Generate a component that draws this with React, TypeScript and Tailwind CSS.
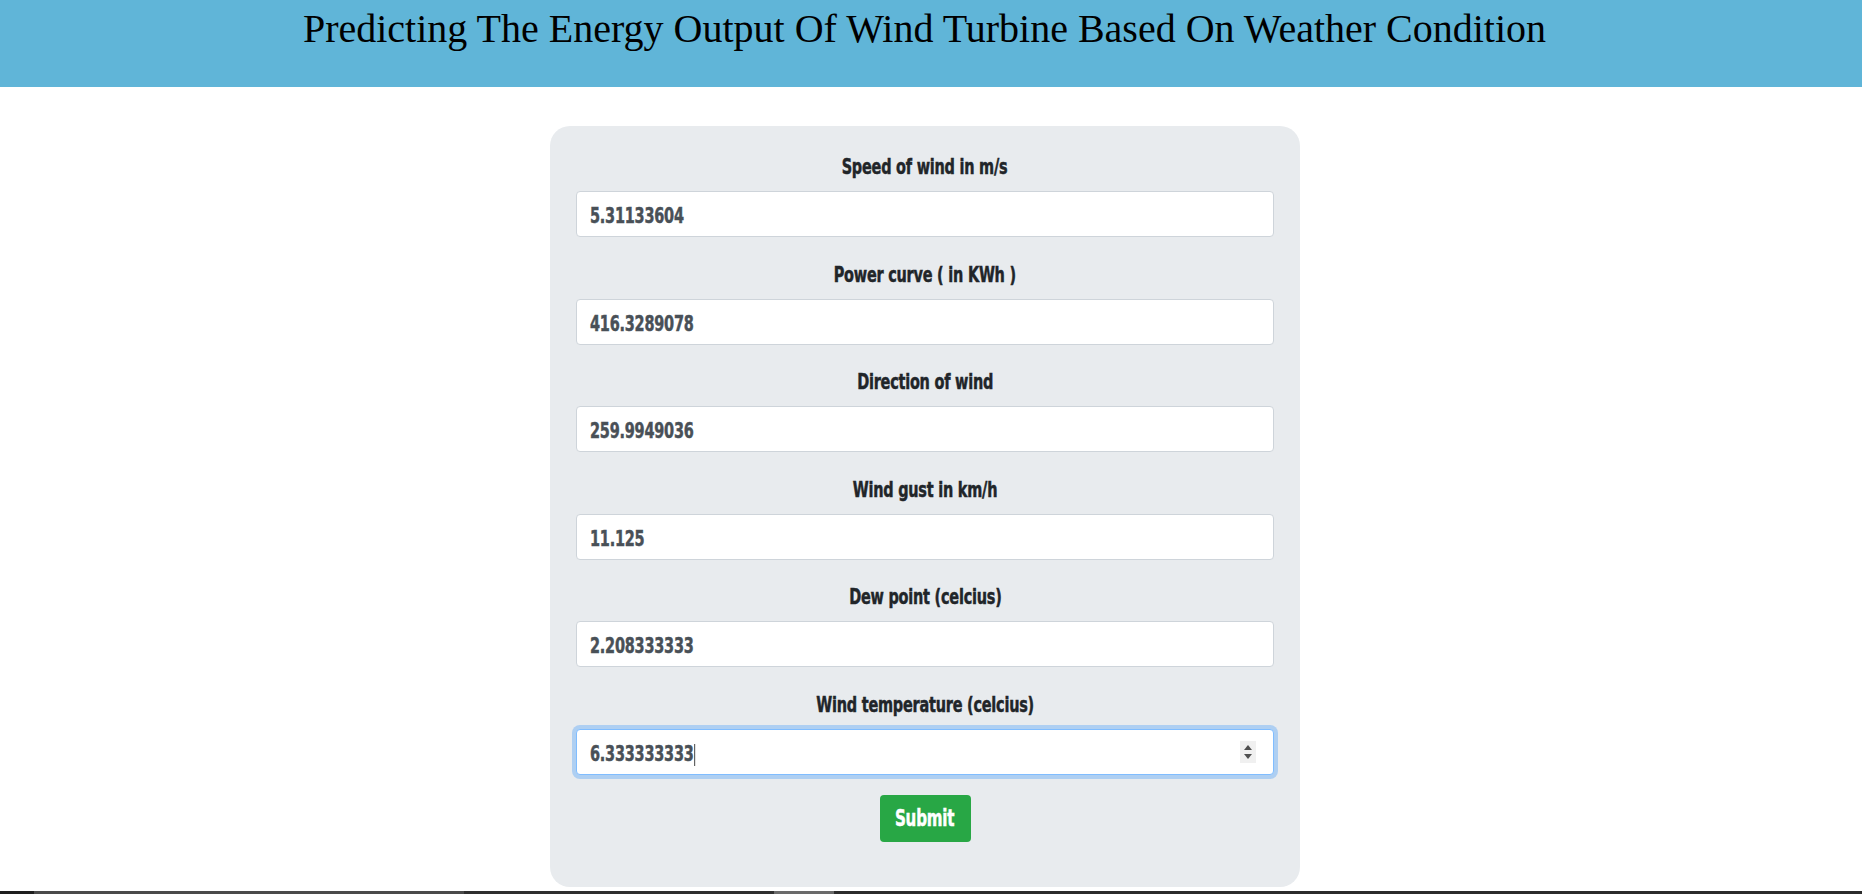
import React from "react";

const fields = [
  { label: "Speed of wind in m/s", value: "5.31133604" },
  { label: "Power curve ( in KWh )", value: "416.3289078" },
  { label: "Direction of wind", value: "259.9949036" },
  { label: "Wind gust in km/h", value: "11.125" },
  { label: "Dew point (celcius)", value: "2.208333333" },
];

const impact = { fontFamily: '"DejaVu Sans Condensed", "DejaVu Sans", "Liberation Sans", sans-serif' };

function Label({ text }: { text: string }) {
  return (
    <div className="text-center h-[41px] leading-[34px]">
      <span
        className="inline-block scale-x-[0.73] origin-center text-[22px] font-bold text-[#212529] tracking-[-0.3px] [-webkit-text-stroke:0.5px_#212529]"
        style={impact}
      >
        {text}
      </span>
    </div>
  );
}

export default function App() {
  return (
    <div className="w-full bg-white flex flex-col" style={{ height: 894 }}>
      <header className="h-[87px] bg-[#60b5d8] flex justify-center shrink-0 pr-[13px]">
        <h1
          className="text-[40px] leading-none text-black mt-[9px]"
          style={{ fontFamily: '"Liberation Serif", "Times New Roman", serif' }}
        >
          Predicting The Energy Output Of Wind Turbine Based On Weather Condition
        </h1>
      </header>
      <div className="flex justify-center mt-[39px] pr-[12px]">
        <form
          className="w-[750px] h-[761px] bg-[#e8ebee] rounded-[20px] px-[26px] pt-[24px] flex flex-col"
          onSubmit={(e) => e.preventDefault()}
        >
          {fields.map((f) => (
            <div key={f.label} className="flex flex-col h-[107.5px]">
              <Label text={f.label} />
              <div className="h-[46px] w-full bg-white border border-[#ced4da] rounded-[4px] px-[13px] pt-[3px] flex items-center">
                <span
                  className="inline-block scale-x-[0.73] origin-left text-[22px] font-bold text-[#495057] tracking-[-0.3px] [-webkit-text-stroke:0.5px_#495057]"
                  style={impact}
                >
                  {f.value}
                </span>
              </div>
            </div>
          ))}
          <div className="flex flex-col h-[107.5px]">
            <Label text="Wind temperature (celcius)" />
            <div className="relative h-[46px] w-full bg-white border border-[#80bdff] rounded-[4px] px-[13px] pt-[3px] flex items-center shadow-[0_0_0_4px_rgba(0,123,255,0.25)]">
              <span
                className="inline-block scale-x-[0.73] origin-left text-[22px] font-bold text-[#495057] tracking-[-0.3px] whitespace-nowrap [-webkit-text-stroke:0.5px_#495057]"
                style={impact}
              >
                6.333333333<span className="inline-block w-[1.4px] h-[22px] bg-black align-middle ml-[1px]" />
              </span>
              <div className="absolute right-[17px] top-1/2 -translate-y-1/2 w-[16px] h-[22px] bg-[#f0f0f0] flex flex-col items-center justify-center gap-[4px]">
                <svg width="8" height="5" viewBox="0 0 8 5">
                  <path d="M0 5 L4 0 L8 5 Z" fill="#4f4f4f" />
                </svg>
                <svg width="8" height="5" viewBox="0 0 8 5">
                  <path d="M0 0 L4 5 L8 0 Z" fill="#4f4f4f" />
                </svg>
              </div>
            </div>
          </div>
          <div className="flex justify-center">
            <button
              type="submit"
              className="w-[91px] h-[47px] bg-[#28a745] text-white rounded-[4px]"
            >
              <span
                className="inline-block scale-x-[0.73] origin-center text-[23px] font-bold tracking-[-0.3px] [-webkit-text-stroke:0.5px_#ffffff]"
                style={impact}
              >
                Submit
              </span>
            </button>
          </div>
        </form>
      </div>
      <div className="mt-auto h-[3px] w-full flex">
        <div className="w-[34px] bg-[#1e1e1e]" />
        <div className="w-[430px] bg-[#4a4a4a]" />
        <div className="w-[310px] bg-[#2f2f2f]" />
        <div className="w-[60px] bg-[#6a6a6a]" />
        <div className="flex-1 bg-[#2b2b2b]" />
      </div>
    </div>
  );
}
